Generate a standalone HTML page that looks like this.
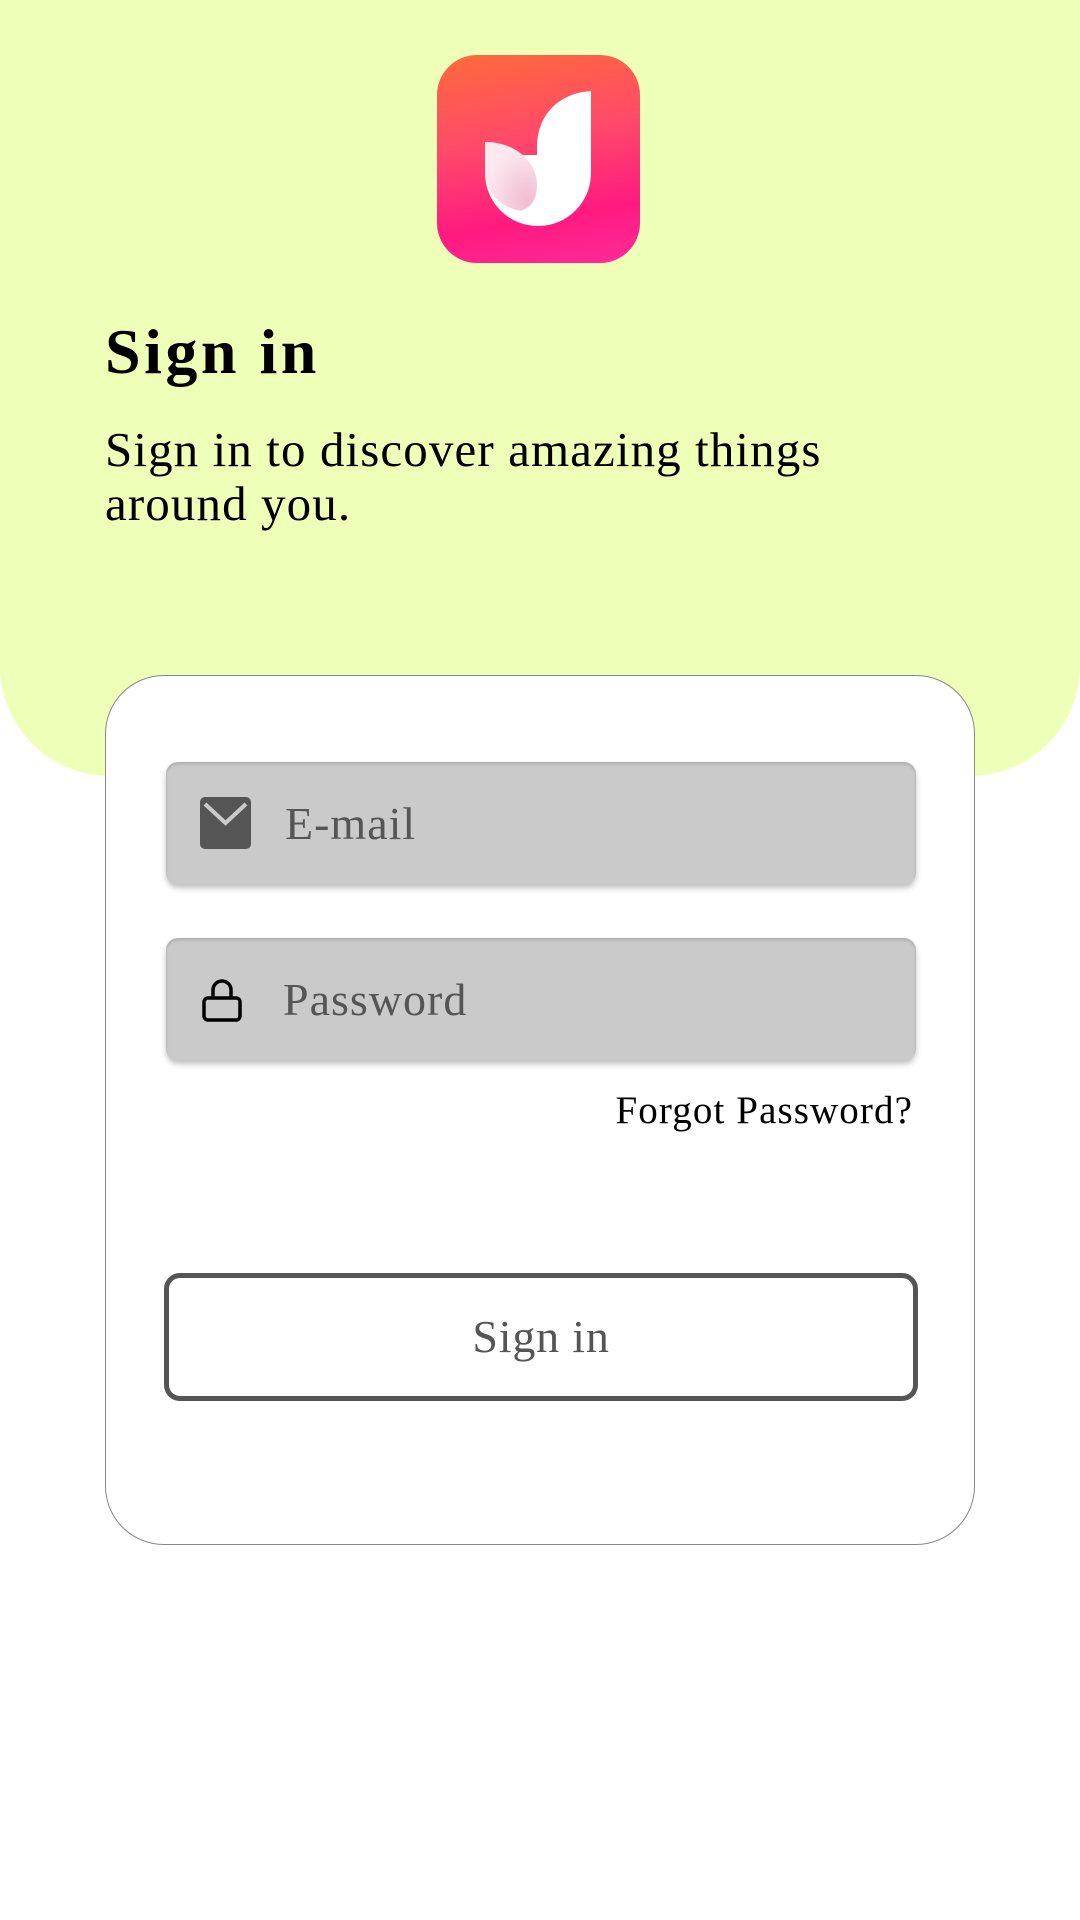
<!DOCTYPE html>
<html><head><meta charset="utf-8"><style>
*{margin:0;padding:0;box-sizing:border-box}
body{width:1080px;height:1920px;background:#fff;position:relative;overflow:hidden;font-family:"Liberation Serif",serif}
.top{position:absolute;left:0;top:0;width:1080px;height:776px;background:#eeffb8;border-radius:0 0 110px 110px}
.logo{position:absolute;left:437px;top:55px;width:203px;height:208px;border-radius:40px;background:linear-gradient(170deg,#ff6a3a 0%,#ff4a6a 40%,#ff1a80 75%,#ff2a9a 100%)}
h1{position:absolute;left:105px;top:312px;font-size:64px;font-weight:bold;line-height:80px;color:#000;letter-spacing:3.5px}
.sub{position:absolute;left:105px;top:423px;font-size:49px;line-height:54px;color:#000;letter-spacing:1.1px;width:860px}
.card{position:absolute;left:105px;top:675px;width:870px;height:870px;background:#fff;border:1px solid #888;border-radius:59px}
.field{position:absolute;left:166px;width:750px;height:122px;background:#cacaca;border-radius:12px;box-shadow:0 4px 6px rgba(0,0,0,.25), inset 0 2px 3px rgba(0,0,0,.15)}
.field span{position:absolute;top:34px;font-size:46px;line-height:56px;color:#555;letter-spacing:1px}
.forgot{position:absolute;right:167px;top:1088px;font-size:39px;line-height:46px;color:#000;letter-spacing:1.1px}
.btn{position:absolute;left:164px;top:1273px;width:754px;height:128px;border:5px solid #555;border-radius:16px;text-align:center;font-size:46px;line-height:118px;color:#555;letter-spacing:0.8px}
</style></head><body>
<div class="top"></div>
<div class="logo">
<svg width="203" height="208" viewBox="0 0 203 208">
<defs><radialGradient id="g" cx="0.8" cy="0.85" r="0.8"><stop offset="0" stop-color="#f0bcd0"/><stop offset="1" stop-color="#fde9f0"/></radialGradient></defs>
<path d="M154 36 L154 118 A53 53 0 0 1 48 118 L48 100 L100 100 L100 92 C100 60 122 38 154 36 Z" fill="#fff"/>
<path d="M48 87 C80 87 100 108 100 130 C100 145 94 152 84 156 C62 152 48 136 48 118 Z" fill="url(#g)"/>
</svg>
</div>
<h1>Sign in</h1>
<div class="sub">Sign in to discover amazing things around you.</div>
<div class="card"></div>
<div class="field" style="top:762px">
<svg style="position:absolute;left:34px;top:35px" width="51" height="52" viewBox="0 0 51 52"><rect x="0" y="0" width="51" height="52" rx="5" fill="#555"/><path d="M5 7 L25.5 26 L46 7" fill="none" stroke="#cacaca" stroke-width="4"/></svg>
<span style="left:119px">E-mail</span></div>
<div class="field" style="top:938px">
<svg style="position:absolute;left:36px;top:40px" width="40" height="44" viewBox="0 0 40 44"><path d="M11 20 V12 A9 9 0 0 1 29 12 V20" fill="none" stroke="#000" stroke-width="3.5"/><rect x="2" y="20" width="36" height="22" rx="4" fill="none" stroke="#000" stroke-width="3.5"/></svg>
<span style="left:117px">Password</span></div>
<div class="forgot">Forgot Password?</div>
<div class="btn">Sign in</div>
</body></html>
